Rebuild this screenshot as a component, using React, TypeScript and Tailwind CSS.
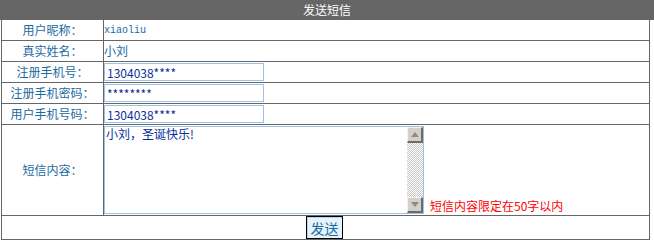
import React from "react";

const font = { fontFamily: "SimSun, 'Noto Sans CJK SC', sans-serif" };

function Row({ label, children }: { label: string; children: React.ReactNode }) {
  return (
    <div className="grid grid-cols-[102px_1fr] h-[21px] border-b border-[#666]">
      <div className="border-r border-[#666] flex items-center justify-center text-[#1b6a9f] text-[12px] leading-none">
        {label}
      </div>
      <div className="flex items-center text-[12px] leading-none">{children}</div>
    </div>
  );
}

function Input({ value }: { value: string }) {
  return (
    <input
      readOnly
      value={value}
      className="w-[160px] h-[18px] border border-[#9ec0e2] px-[2px] text-[12px] text-[#0a2f9a] outline-none bg-white"
      style={font}
    />
  );
}

function ScrollBtn({ up }: { up: boolean }) {
  return (
    <div className="w-[16px] h-[16px] bg-[#d4d0c8] border-t border-l border-t-[#f4f3ee] border-l-[#f4f3ee] border-r-2 border-b-2 border-r-[#6b6b6b] border-b-[#6b6b6b] flex items-center justify-center">
      <svg width="8" height="5" viewBox="0 0 8 5">
        {up ? <polygon points="0,5 4,0 8,5" fill="#8a8a8a" /> : <polygon points="0,0 4,5 8,0" fill="#8a8a8a" />}
      </svg>
    </div>
  );
}

export default function App() {
  return (
    <div className="w-[654px] h-[242px] bg-white" style={font}>
      <div className="h-[20px] bg-[#666] text-white text-[12px] flex items-center justify-center leading-none pb-[1px]">
        发送短信
      </div>
      <div className="ml-[1px] w-[649px] border-x border-[#666]">
        <Row label="用户昵称：">
          <span
            className="text-[#1b6a9f] text-[10px] pt-[1px]"
            style={{ fontFamily: "'Liberation Mono', monospace" }}
          >
            xiaoliu
          </span>
        </Row>
        <Row label="真实姓名：">
          <span className="text-[#1b6a9f] text-[12px]">小刘</span>
        </Row>
        <Row label="注册手机号：">
          <Input value="1304038****" />
        </Row>
        <Row label="注册手机密码：">
          <Input value="********" />
        </Row>
        <Row label="用户手机号码：">
          <Input value="1304038****" />
        </Row>
        <div className="grid grid-cols-[102px_1fr] h-[91px] border-b border-[#666]">
          <div className="border-r border-[#666] flex items-center justify-center text-[#1b6a9f] text-[12px] leading-none">
            短信内容：
          </div>
          <div className="flex items-end pt-[1px] pb-[1px]">
            <div className="w-[320px] h-[88px] border border-[#9ec0e2] flex">
              <textarea
                readOnly
                value="小刘，圣诞快乐!"
                className="flex-1 resize-none outline-none px-[1px] pt-0 text-[12px] leading-[14px] text-[#0a2f9a] overflow-hidden"
                style={font}
              />
              <div className="w-[16px] flex flex-col">
                <ScrollBtn up />
                <div className="flex-1 bg-[repeating-conic-gradient(#c8c8c8_0_25%,#ffffff_0_50%)] bg-[length:2px_2px]" />
                <ScrollBtn up={false} />
              </div>
            </div>
            <span className="ml-[6px] mb-[2px] text-[12px] leading-none text-[#ff0000]">
              短信内容限定在50字以内
            </span>
          </div>
        </div>
        <div className="h-[24px] border-b border-[#666] flex justify-center items-start">
          <button className="ml-[-2px] w-[37px] h-[23px] border border-black bg-[#e6f2fc] text-[14px] leading-none text-[#1b6a9f] shadow-[inset_1px_1px_0_#b9d4ec]" style={font}>
            发送
          </button>
        </div>
      </div>
    </div>
  );
}
